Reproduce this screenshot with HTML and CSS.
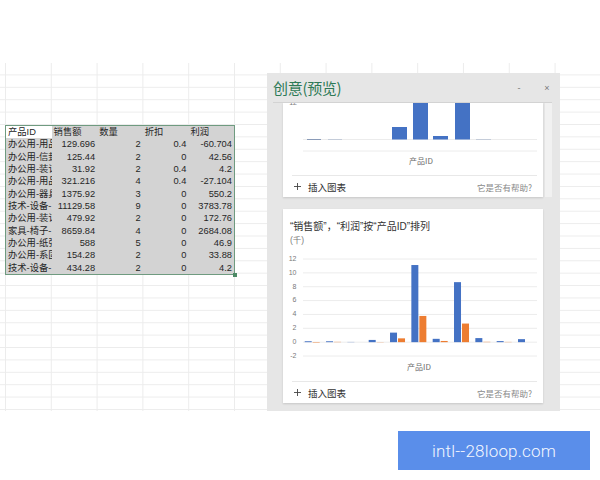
FILE: index.html
```html
<!DOCTYPE html>
<html lang="zh-CN">
<head>
  <meta charset="UTF-8" />
  <meta name="viewport" content="width=device-width, initial-scale=1" />
  <title>创意(预览)</title>
  <link rel="stylesheet" href="styles.css">
</head>
<body>
  <!-- worksheet with the selected range -->
  <div class="sheet">
    <div class="range">
      <div class="cell active">产品ID</div><div class="cell">销售额</div><div class="cell">数量</div><div class="cell">折扣</div><div class="cell">利润</div>
      <div class="cell">办公用-用品</div><div class="cell num">129.696</div><div class="cell num">2</div><div class="cell num">0.4</div><div class="cell num">-60.704</div>
      <div class="cell">办公用-信封</div><div class="cell num">125.44</div><div class="cell num">2</div><div class="cell num">0</div><div class="cell num">42.56</div>
      <div class="cell">办公用-装订</div><div class="cell num">31.92</div><div class="cell num">2</div><div class="cell num">0.4</div><div class="cell num">4.2</div>
      <div class="cell">办公用-用品</div><div class="cell num">321.216</div><div class="cell num">4</div><div class="cell num">0.4</div><div class="cell num">-27.104</div>
      <div class="cell">办公用-器具</div><div class="cell num">1375.92</div><div class="cell num">3</div><div class="cell num">0</div><div class="cell num">550.2</div>
      <div class="cell">技术-设备-</div><div class="cell num">11129.58</div><div class="cell num">9</div><div class="cell num">0</div><div class="cell num">3783.78</div>
      <div class="cell">办公用-装订</div><div class="cell num">479.92</div><div class="cell num">2</div><div class="cell num">0</div><div class="cell num">172.76</div>
      <div class="cell">家具-椅子-</div><div class="cell num">8659.84</div><div class="cell num">4</div><div class="cell num">0</div><div class="cell num">2684.08</div>
      <div class="cell">办公用-纸张</div><div class="cell num">588</div><div class="cell num">5</div><div class="cell num">0</div><div class="cell num">46.9</div>
      <div class="cell">办公用-系固</div><div class="cell num">154.28</div><div class="cell num">2</div><div class="cell num">0</div><div class="cell num">33.88</div>
      <div class="cell">技术-设备-</div><div class="cell num">434.28</div><div class="cell num">2</div><div class="cell num">0</div><div class="cell num">4.2</div>
    </div>
  </div>

  <!-- Ideas task pane -->
  <aside class="pane">
    <div class="pane-head">
      <span class="pane-title">创意(预览)</span>
      <span class="ctl">-</span>
      <span class="ctl">×</span>
    </div>
    <div class="pane-body">
      <div class="cards">
        <div class="card card-cut">
          <svg class="chart" width="260" height="64" viewBox="0 0 260 64">
            <text x="14" y="0" class="tick">12</text>
            <line x1="20" y1="36.5" x2="254" y2="36.5" class="grid" />
            <line x1="20" y1="48" x2="254" y2="48" class="grid" />
            <rect x="24" y="36" width="14" height="1" fill="#8a9bb8" />
            <rect x="45" y="36" width="14" height="1" fill="#c4ccd9" />
            <rect x="109" y="24" width="15" height="12.5" fill="#4472c4" />
            <rect x="130" y="0" width="15" height="36.5" fill="#4472c4" />
            <rect x="150" y="33" width="15" height="3.5" fill="#4472c4" />
            <rect x="172" y="0" width="15" height="36.5" fill="#4472c4" />
            <rect x="193" y="36" width="15" height="1" fill="#c4ccd9" />
            <text x="138" y="59" class="axis">产品ID</text>
          </svg>
          <div class="rule"></div>
          <div class="card-foot">
            <span class="insert"><svg width="7" height="7" viewBox="0 0 7 7"><path d="M3.5 0V7M0 3.5H7" stroke="#444" stroke-width="0.9" /></svg>插入图表</span>
            <span class="help">它是否有帮助?</span>
          </div>
        </div>

        <div class="card">
          <div class="card-title">“销售额”，“利润”按“产品ID”排列</div>
          <div class="card-unit">(千)</div>
          <svg class="chart" width="260" height="126" viewBox="0 0 260 126">
            <g class="grid">
              <line x1="20" y1="12" x2="254" y2="12" />
              <line x1="20" y1="25.86" x2="254" y2="25.86" />
              <line x1="20" y1="39.72" x2="254" y2="39.72" />
              <line x1="20" y1="53.58" x2="254" y2="53.58" />
              <line x1="20" y1="67.44" x2="254" y2="67.44" />
              <line x1="20" y1="81.3" x2="254" y2="81.3" />
              <line x1="20" y1="95.16" x2="254" y2="95.16" />
              <line x1="20" y1="109.02" x2="254" y2="109.02" />
            </g>
            <text x="13.5" y="12" class="tick">12</text>
            <text x="13.5" y="25.86" class="tick">10</text>
            <text x="13.5" y="39.72" class="tick">8</text>
            <text x="13.5" y="53.58" class="tick">6</text>
            <text x="13.5" y="67.44" class="tick">4</text>
            <text x="13.5" y="81.3" class="tick">2</text>
            <text x="13.5" y="95.16" class="tick">0</text>
            <text x="13.5" y="109.02" class="tick">-2</text>
            <g fill="#4472c4">
              <rect x="21.7" y="94.26" width="7" height="0.9" />
              <rect x="43.03" y="94.29" width="7" height="0.87" />
              <rect x="64.36" y="94.94" width="7" height="0.22" />
              <rect x="85.69" y="92.93" width="7" height="2.23" />
              <rect x="107.02" y="85.62" width="7" height="9.54" />
              <rect x="128.35" y="18.03" width="7" height="77.13" />
              <rect x="149.68" y="91.83" width="7" height="3.33" />
              <rect x="171.01" y="35.15" width="7" height="60.01" />
              <rect x="192.34" y="91.09" width="7" height="4.07" />
              <rect x="213.67" y="94.09" width="7" height="1.07" />
              <rect x="235" y="92.15" width="7" height="3.01" />
            </g>
            <g fill="#ed7d31">
              <rect x="29.7" y="95.16" width="7" height="0.42" />
              <rect x="51.03" y="94.87" width="7" height="0.29" />
              <rect x="93.69" y="95.16" width="7" height="0.19" />
              <rect x="115.02" y="91.35" width="7" height="3.81" />
              <rect x="136.35" y="68.94" width="7" height="26.22" />
              <rect x="157.68" y="93.96" width="7" height="1.2" />
              <rect x="179.01" y="76.56" width="7" height="18.6" />
              <rect x="200.34" y="94.83" width="7" height="0.33" />
              <rect x="221.67" y="94.93" width="7" height="0.23" />
            </g>
            <text x="136" y="121" class="axis">产品ID</text>
          </svg>
          <div class="rule"></div>
          <div class="card-foot">
            <span class="insert"><svg width="7" height="7" viewBox="0 0 7 7"><path d="M3.5 0V7M0 3.5H7" stroke="#444" stroke-width="0.9" /></svg>插入图表</span>
            <span class="help">它是否有帮助?</span>
          </div>
        </div>
      </div>
      <div class="scrollbar"><div class="thumb"></div></div>
    </div>
  </aside>

  <div class="stamp">intl--28loop.com</div>
</body>
</html>
```

FILE: styles.css
```css
body {
  margin: 0;
  width: 600px;
  height: 480px;
  overflow: hidden;
  position: relative;
  background: #fff;
  font-family: "Liberation Sans", "Noto Sans CJK SC", sans-serif;
  color: #262626;
}

/* worksheet grid */
.sheet {
  margin-top: 63px;
  height: 348px;
  box-sizing: border-box;
  padding: 62px 0 0 5px;
  background-image:
    linear-gradient(to right, #ececec 1px, transparent 1px),
    linear-gradient(to bottom, transparent 11.4px, #ececec 11.4px);
  background-size: 45.8px 12.4px, 45.8px 12.4px;
  background-position: 5px 0, 0 0;
}
.range {
  position: relative;
  display: grid;
  grid-template-columns: repeat(5, 45.6px);
  grid-auto-rows: 12.33px;
  width: fit-content;
  background: #d3d3d3;
  border: 1px solid #6f9b80;
}
.range::after {
  content: "";
  position: absolute;
  right: -3px;
  bottom: -3px;
  width: 4px;
  height: 4px;
  background: #4d8a66;
}
.cell {
  font-size: 9.3px;
  line-height: 12.33px;
  padding: 0 2px;
  white-space: nowrap;
  overflow: hidden;
  text-overflow: clip;
}
.cell.active {
  background: #fff;
}
.cell.num {
  text-align: right;
}

/* ideas pane */
.pane {
  position: absolute;
  left: 267px;
  top: 73px;
  width: 293px;
  height: 338px;
  background: #e6e6e6;
  font-family: "Noto Sans CJK SC", sans-serif;
}
.pane-head {
  display: flex;
  align-items: center;
  height: 29px;
  padding: 0 8px 0 6px;
}
.pane-title {
  flex: 1;
  font-size: 15px;
  color: #2e7a56;
  letter-spacing: -0.3px;
}
.ctl {
  width: 10px;
  text-align: center;
  font-family: "Liberation Sans", sans-serif;
  font-size: 9px;
  color: #7a7a7a;
}
.ctl + .ctl {
  margin-left: 18px;
}
.pane-body {
  display: flex;
  height: 308px;
  margin: 0 8px 0 6px;
  border-top: 1px solid #d3d3d3;
  overflow: hidden;
}
.cards {
  width: 260px;
  margin-left: 10px;
}
.card {
  background: #fff;
  box-shadow: 0 1px 2px rgba(0, 0, 0, 0.14);
  margin-top: 12px;
}
.card-cut {
  margin-top: 0;
}
.chart {
  display: block;
}
.chart .grid,
.chart .grid line {
  stroke: #ececec;
  stroke-width: 1;
}
.chart .tick {
  font-family: "Liberation Sans", sans-serif;
  font-size: 7px;
  fill: #7a7a7a;
  text-anchor: end;
  dominant-baseline: middle;
}
.chart .axis {
  font-family: "Noto Sans CJK SC", sans-serif;
  font-size: 8px;
  fill: #6a6a6a;
  text-anchor: middle;
  dominant-baseline: middle;
}
.card-title {
  padding: 10px 0 0 7px;
  font-family: "Liberation Sans", "Noto Sans CJK SC", sans-serif;
  font-size: 10px;
  line-height: 15px;
  color: #333;
}
.card-unit {
  padding-left: 7px;
  font-family: "Liberation Sans", "Noto Sans CJK SC", sans-serif;
  font-size: 8.5px;
  line-height: 13px;
  color: #7a7a7a;
}
.rule {
  margin: 8px 6px 0 9px;
  border-top: 1px solid #e8e8e8;
}
.card-foot {
  display: flex;
  align-items: center;
  justify-content: space-between;
  height: 21px;
  padding: 0 11px;
}
.insert {
  display: flex;
  align-items: center;
  gap: 7px;
  font-size: 9.5px;
  color: #333;
}
.help {
  font-size: 8.5px;
  color: #8a8a8a;
}
.scrollbar {
  width: 7px;
  margin-left: 2px;
}
.thumb {
  height: 94px;
  background: #f1f1f1;
}

/* watermark */
.stamp {
  position: absolute;
  left: 398px;
  top: 431px;
  width: 192px;
  height: 39px;
  display: flex;
  align-items: center;
  justify-content: center;
  background: #5a8eea;
  color: #f4f7ff;
  font-family: Roboto, sans-serif;
  font-size: 17px;
  font-weight: 300;
  letter-spacing: 0.2px;
}
```
